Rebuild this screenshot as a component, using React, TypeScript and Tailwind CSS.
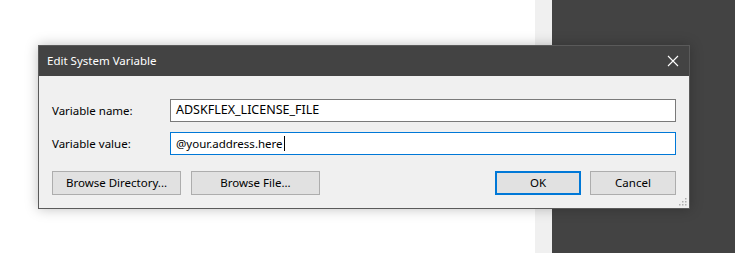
import React from "react";

const font = { fontFamily: '"Noto Sans", "Open Sans", Arial, sans-serif' };

function Btn({ label, w, primary }: { label: string; w: string; primary?: boolean }) {
  return (
    <button
      className={`${w} h-[24px] bg-[#e1e1e1] text-[11.5px] text-black ${
        primary ? "border-2 border-[#0078d7]" : "border border-[#adadad]"
      }`}
    >
      {label}
    </button>
  );
}

export default function App() {
  return (
    <div className="relative w-[735px] h-[253px] overflow-hidden flex" style={font}>
      <div className="flex-1 bg-white" />
      <div className="w-[17px] bg-[#f0f0f0]" />
      <div className="w-[183px] bg-[#434343]" />

      <div className="absolute left-[38px] top-[45px] w-[652px] h-[164px] bg-[#f0f0f0] border border-[#5a5a5a] shadow-[0_0_12px_rgba(0,0,0,0.25)] flex flex-col">
        <div className="h-[30px] bg-[#434343] flex items-center justify-between pl-[8px] pr-[8px] text-white">
          <span className="text-[11.5px]">Edit System Variable</span>
          <svg width="12" height="12" viewBox="0 0 12 12" className="mr-[2px]">
            <path d="M1 1L11 11M11 1L1 11" stroke="#ffffff" strokeWidth="1.1" />
          </svg>
        </div>

        <div className="flex-1 relative pl-[13px] pr-[13px] pt-[23px]">
          <div className="flex items-center h-[23px]">
            <span className="w-[118px] text-[11.5px] text-black">Variable name:</span>
            <div className="flex-1 h-[23px] bg-white border border-[#7a7a7a] flex items-center px-[5px] text-[12.5px] text-black">
              ADSKFLEX_LICENSE_FILE
            </div>
          </div>
          <div className="flex items-center h-[23px] mt-[10px]">
            <span className="w-[118px] text-[11.5px] text-black">Variable value:</span>
            <div className="flex-1 h-[23px] bg-white border border-[#0078d7] flex items-center px-[5px] text-[11.5px] text-black">
              @your.address.here
              <span className="w-[1.5px] h-[15px] bg-black ml-[1px]" />
            </div>
          </div>
          <div className="flex items-center mt-[16px]">
            <Btn label="Browse Directory..." w="w-[129px]" />
            <div className="w-[10px]" />
            <Btn label="Browse File..." w="w-[129px]" />
            <div className="flex-1" />
            <Btn label="OK" w="w-[86px]" primary />
            <div className="w-[9px]" />
            <Btn label="Cancel" w="w-[86px]" />
          </div>

          <svg width="8" height="8" viewBox="0 0 8 8" className="absolute right-[2px] bottom-[2px]">
            <rect x="6" y="0" width="1.5" height="1.5" fill="#b0b0b0" />
            <rect x="3" y="3" width="1.5" height="1.5" fill="#b0b0b0" />
            <rect x="6" y="3" width="1.5" height="1.5" fill="#b0b0b0" />
            <rect x="0" y="6" width="1.5" height="1.5" fill="#b0b0b0" />
            <rect x="3" y="6" width="1.5" height="1.5" fill="#b0b0b0" />
            <rect x="6" y="6" width="1.5" height="1.5" fill="#b0b0b0" />
          </svg>
        </div>
      </div>
    </div>
  );
}
